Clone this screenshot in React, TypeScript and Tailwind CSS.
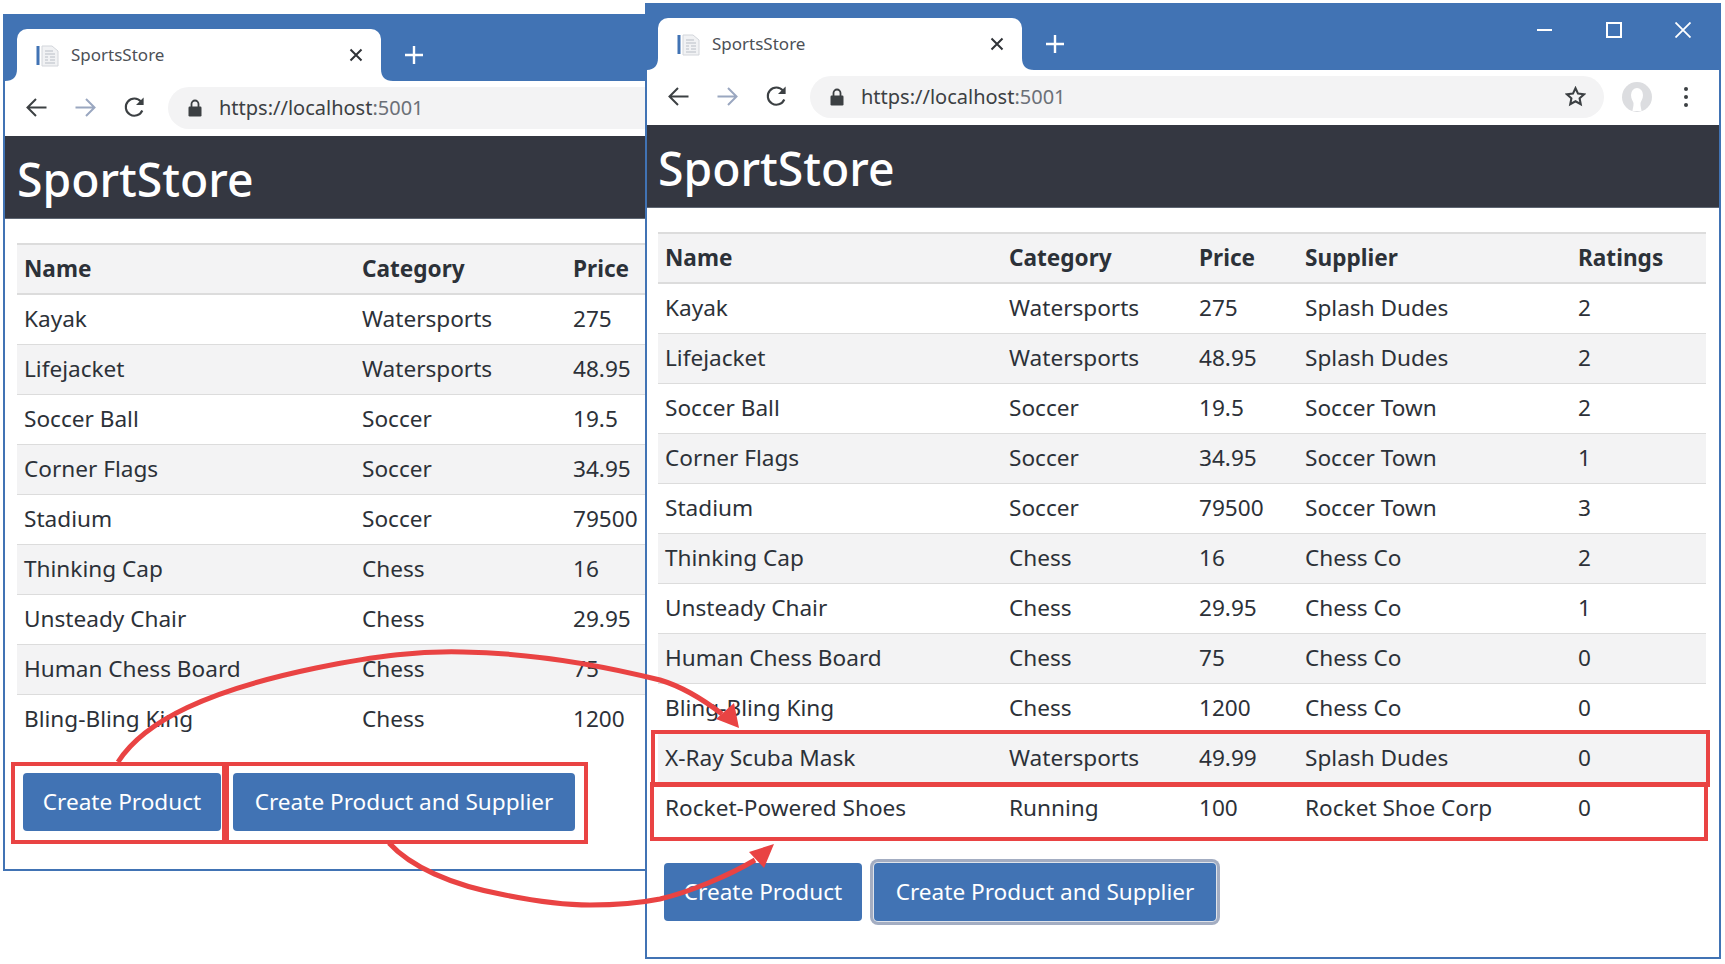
import React from "react";

type Row = { name: string; category: string; price: string; supplier: string; ratings: string };

const base: Row[] = [
  { name: "Kayak", category: "Watersports", price: "275", supplier: "Splash Dudes", ratings: "2" },
  { name: "Lifejacket", category: "Watersports", price: "48.95", supplier: "Splash Dudes", ratings: "2" },
  { name: "Soccer Ball", category: "Soccer", price: "19.5", supplier: "Soccer Town", ratings: "2" },
  { name: "Corner Flags", category: "Soccer", price: "34.95", supplier: "Soccer Town", ratings: "1" },
  { name: "Stadium", category: "Soccer", price: "79500", supplier: "Soccer Town", ratings: "3" },
  { name: "Thinking Cap", category: "Chess", price: "16", supplier: "Chess Co", ratings: "2" },
  { name: "Unsteady Chair", category: "Chess", price: "29.95", supplier: "Chess Co", ratings: "1" },
  { name: "Human Chess Board", category: "Chess", price: "75", supplier: "Chess Co", ratings: "0" },
  { name: "Bling-Bling King", category: "Chess", price: "1200", supplier: "Chess Co", ratings: "0" },
];
const extra: Row[] = [
  { name: "X-Ray Scuba Mask", category: "Watersports", price: "49.99", supplier: "Splash Dudes", ratings: "0" },
  { name: "Rocket-Powered Shoes", category: "Running", price: "100", supplier: "Rocket Shoe Corp", ratings: "0" },
];

function Favicon() {
  return (
    <svg width="24" height="24" viewBox="0 0 24 24" className="shrink-0">
      <rect x="0.5" y="3" width="3" height="19" fill="#4173b4" />
      <path d="M6 3h10l6 5v15H6z" fill="#f1f2f4" stroke="#d3d6db" />
      <path d="M9 8h8M9 11h10M9 14h3M14 14h5M9 17h3M14 17h5M9 20h10" stroke="#b9bec6" strokeWidth="1.2" />
    </svg>
  );
}

function Flare({ side }: { side: "left" | "right" }) {
  return (
    <svg
      width="12"
      height="12"
      viewBox="0 0 12 12"
      className={side === "left" ? "absolute bottom-0 -left-3" : "absolute bottom-0 -right-3"}
    >
      <path d={side === "left" ? "M12 0v12H0C8 12 12 8 12 0z" : "M0 0v12h12C4 12 0 8 0 0z"} fill="#ffffff" />
    </svg>
  );
}

function Toolbar() {
  return (
    <div className="flex h-[55px] items-center bg-white pb-[2px] pl-[21px]">
      <svg width="21" height="21" viewBox="0 0 21 21" fill="none" stroke="#3c4043" strokeWidth="2" className="shrink-0">
        <path d="M20.5 10.5H2M10 2l-8.500 8.500L10 19" />
      </svg>
      <svg width="21" height="21" viewBox="0 0 21 21" fill="none" stroke="#9aa7c0" strokeWidth="2" className="ml-[28px] shrink-0">
        <path d="M0.500 10.500H19M11 2l8.500 8.500L11 19" />
      </svg>
      <svg width="21" height="21" viewBox="0 0 21 21" fill="none" stroke="#3c4043" strokeWidth="2.1" className="ml-[28px] shrink-0">
        <path d="M18.300 13.500A8.600 8.600 0 1 1 17 4.600" />
        <path d="M19.600 0.500v7.600H12z" fill="#3c4043" stroke="none" />
      </svg>
      <div className="ml-[23px] flex h-[42px] w-[794px] shrink-0 items-center rounded-full bg-[#f3f3f4] pl-[20px] pr-[18px]">
        <svg width="14" height="18" viewBox="0 0 14 18" className="shrink-0">
          <path d="M3.500 8V5a3.500 3.500 0 0 1 7 0v3" fill="none" stroke="#3c4043" strokeWidth="1.8" />
          <rect x="0.500" y="7.500" width="13" height="10" rx="1.2" fill="#3c4043" />
        </svg>
        <span className="ml-[17px] text-[20px] leading-none text-[#6b7077]">
          <span className="text-[#3c4043]">https://localhost</span>:5001
        </span>
        <svg width="21" height="21" viewBox="0 0 24 24" fill="none" stroke="#3c4043" strokeWidth="2.4" className="ml-auto shrink-0">
          <path d="M12 2.500l2.900 6.200 6.800.8-5 4.600 1.300 6.700L12 17.500 6 20.800l1.300-6.700-5-4.600 6.800-.8z" />
        </svg>
      </div>
      <svg width="30" height="30" viewBox="0 0 30 30" className="ml-[18px] shrink-0">
        <circle cx="15" cy="15" r="15" fill="#dcdde0" />
        <path d="M9 13a6 7 0 0 1 12 0c0 4-2 6-2.500 8-.3 3 1 6 1 8h-9c0-2 1.300-5 1-8C11 19 9 17 9 13z" fill="#ffffff" />
      </svg>
      <div className="ml-[32px] flex shrink-0 flex-col gap-[4px]">
        <div className="h-[4px] w-[4px] rounded-full bg-[#3c4043]" />
        <div className="h-[4px] w-[4px] rounded-full bg-[#3c4043]" />
        <div className="h-[4px] w-[4px] rounded-full bg-[#3c4043]" />
      </div>
    </div>
  );
}

function TabStrip({ indent }: { indent: string }) {
  return (
    <div className={`flex h-[65px] items-end bg-[#4173b4] ${indent}`}>
      <div className="relative flex h-[52px] w-[364px] shrink-0 items-center rounded-t-[10px] bg-white pl-[19px] pr-[18px]">
        <Flare side="left" />
        <Flare side="right" />
        <Favicon />
        <span className="ml-[11px] text-[17px] text-[#4c5056]">SportsStore</span>
        <svg width="14" height="14" viewBox="0 0 14 14" stroke="#303338" strokeWidth="2" className="ml-auto">
          <path d="M1.500 1.500l11 11M12.500 1.500l-11 11" />
        </svg>
      </div>
      <div className="ml-[24px] flex h-[52px] items-center">
        <svg width="18" height="18" viewBox="0 0 18 18" stroke="#ffffff" strokeWidth="2.400">
          <path d="M9 0v18M0 9h18" />
        </svg>
      </div>
      <div className="ml-auto flex h-[50px] items-center self-start pr-[2px]">
        <div className="flex w-[69px] justify-center">
          <div className="h-[2px] w-[15px] bg-white" />
        </div>
        <div className="flex w-[69px] justify-center">
          <div className="h-[16px] w-[16px] border-2 border-white" />
        </div>
        <div className="flex w-[69px] justify-center">
          <svg width="16" height="16" viewBox="0 0 16 16" stroke="#ffffff" strokeWidth="1.800">
            <path d="M0.500 0.500l15 15M15.500 0.500l-15 15" />
          </svg>
        </div>
      </div>
    </div>
  );
}

function ProductTable({ rows, widths, full }: { rows: Row[]; widths: string[]; full: boolean }) {
  const cell = "px-2 text-left align-middle";
  const first = "pl-[7px] pr-2 text-left align-middle";
  return (
    <table className="w-[1048px] table-fixed border-collapse">
      <colgroup>
        {widths.map((w, i) => (
          <col key={i} className={w} />
        ))}
      </colgroup>
      <thead>
        <tr className="h-[50px] border-y-2 border-[#dcdcdc] bg-[#f3f3f4]">
          <th className={`${first} font-bold`}>Name</th>
          <th className={`${cell} font-bold`}>Category</th>
          <th className={`${cell} font-bold`}>Price</th>
          {full && <th className={`${cell} font-bold`}>Supplier</th>}
          {full && <th className={`${cell} font-bold`}>Ratings</th>}
        </tr>
      </thead>
      <tbody>
        {rows.map((r, i) => (
          <tr
            key={r.name}
            className={`h-[50px] border-b border-[#dcdcdc] last:border-b-0 ${i % 2 === 1 ? "bg-[#f3f3f4]" : "bg-white"}`}
          >
            <td className={first}>{r.name}</td>
            <td className={cell}>{r.category}</td>
            <td className={cell}>{r.price}</td>
            {full && <td className={cell}>{r.supplier}</td>}
            {full && <td className={cell}>{r.ratings}</td>}
          </tr>
        ))}
      </tbody>
    </table>
  );
}

function Browser({
  frame,
  rows,
  widths,
  full,
  focused,
  tabIndent,
  pad,
  gap,
}: {
  frame: string;
  rows: Row[];
  widths: string[];
  full: boolean;
  focused: boolean;
  tabIndent: string;
  pad: string;
  gap: string;
}) {
  return (
    <div className={`absolute overflow-hidden border-2 border-[#4173b4] bg-white ${frame}`}>
      <TabStrip indent={tabIndent} />
      <Toolbar />
      <div className={`flex h-[83px] items-center border-b border-[#5e6672] bg-[#343741] pt-[7px] ${pad}`}>
        <h1 className="text-[46.300px] leading-none font-medium text-white">SportStore</h1>
      </div>
      <div className={`pt-[24px] ${pad}`}>
        <ProductTable rows={rows} widths={widths} full={full} />
        <div className={`flex gap-[12px] pl-[6px] ${gap}`}>
          <button className="h-[58px] w-[198px] rounded-[4px] bg-[#4173b4] text-white">Create Product</button>
          <button
            className={`h-[58px] w-[342px] rounded-[4px] bg-[#4173b4] text-white ${
              focused ? "shadow-[0_0_0_1px_#dfe3ea,0_0_0_4px_#a3adc2]" : ""
            }`}
          >
            Create Product and Supplier
          </button>
        </div>
      </div>
    </div>
  );
}

function RedBox({ frame }: { frame: string }) {
  return <div className={`pointer-events-none absolute border-4 border-[#e94343] ${frame}`} />;
}

export default function App() {
  return (
    <div className="relative h-[964px] w-[1725px] overflow-hidden bg-white text-[22.600px] text-[#2c3138] [font-family:'Noto_Sans',sans-serif]">
      <Browser
        frame="left-[3px] top-[14px] h-[857px] w-[1076px]"
        rows={base}
        widths={["w-[337px]", "w-[211px]", "w-[500px]"]}
        full={false}
        focused={false}
        tabIndent="pl-[12px]"
        pad="px-[12px]"
        gap="mt-[29px]"
      />
      <Browser
        frame="left-[645px] top-[3px] h-[956px] w-[1076px]"
        rows={[...base, ...extra]}
        widths={["w-[343px]", "w-[190px]", "w-[106px]", "w-[273px]", "w-[136px]"]}
        full
        focused
        tabIndent="pl-[11px]"
        pad="px-[11px]"
        gap="mt-[30px]"
      />
      <RedBox frame="left-[11px] top-[762px] h-[82px] w-[215px]" />
      <RedBox frame="left-[225px] top-[762px] h-[82px] w-[363px]" />
      <RedBox frame="left-[651px] top-[730px] h-[57px] w-[1059px]" />
      <RedBox frame="left-[650px] top-[782px] h-[59px] w-[1058px]" />
      <svg width="1725" height="964" viewBox="0 0 1725 964" className="pointer-events-none absolute left-0 top-0" fill="none">
        <path
          d="M118 762C145 720 210 690 316 668C380 655 420 651 463 652C530 653 600 665 660 680C680 686 700 697 722 714"
          stroke="#e94343"
          strokeWidth="5"
        />
        <path d="M739 728L716 719L734 703z" fill="#e94343" />
        <path
          d="M389 843C410 866 450 885 505 895C530 900 560 905 590 905C615 905 640 903 660 899C690 892 730 875 755 860"
          stroke="#e94343"
          strokeWidth="5"
        />
        <path d="M774 844L749 852L764 868z" fill="#e94343" />
      </svg>
    </div>
  );
}
